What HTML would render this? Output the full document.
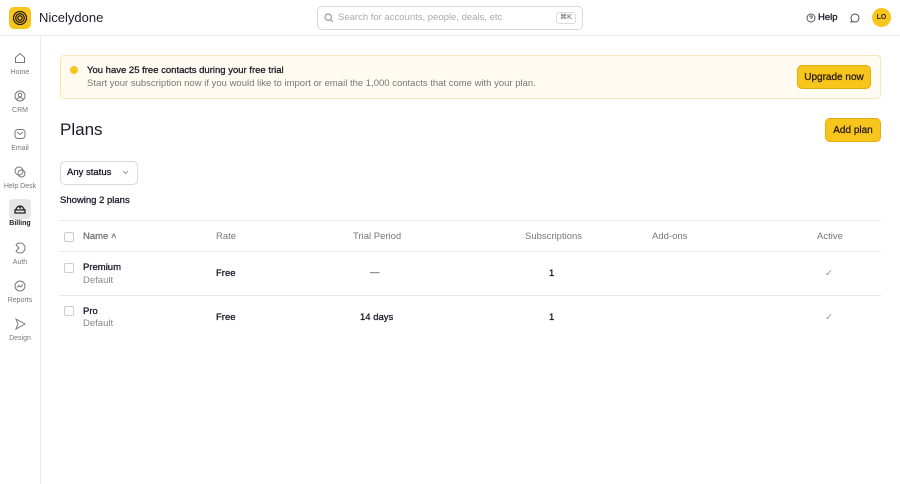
<!DOCTYPE html>
<html><head><style>
*{box-sizing:border-box;margin:0;padding:0}
body{width:900px;height:484px;background:#fff;font-family:"Liberation Sans",sans-serif;color:#2a1f33;position:relative;overflow:hidden}
.a{position:absolute}
.m{-webkit-text-stroke:0.3px currentColor;color:#1f1a2a}
.hdr{left:0;top:0;width:900px;height:36px;border-bottom:1px solid #ececec}
.side{left:0;top:36px;width:41px;height:448px;border-right:1px solid #ececec}
.ni{position:absolute;left:0;width:40px;text-align:center;font-size:7px;color:#777}
.ni svg{display:block;margin:0 auto 5px}
.btn{background:#f8c51c;border:1px solid #e2ad10;border-radius:5px;font-size:10px;color:#2a1f10;display:flex;align-items:center;justify-content:center;-webkit-text-stroke:0.3px #2a1f10}
.th{font-size:9.5px;color:#777;top:231px}
.cb{width:10px;height:10px;border:1px solid #ccc;border-radius:2px}
.t{font-size:9.5px}
.hr{left:60px;width:821px;height:1px;background:#e8e8e8}
</style></head><body>
<div class="a hdr"></div>
<div class="a" style="left:9px;top:7px;width:22px;height:22px;background:#f8c51c;border-radius:5px"></div>
<svg class="a" style="left:12px;top:10px" width="16" height="16" viewBox="0 0 16 16" fill="none" stroke="#2a1f10" stroke-width="1.3"><circle cx="8" cy="8" r="6.5"/><circle cx="8" cy="8" r="4.3"/><circle cx="8" cy="8" r="2.2"/></svg>
<div class="a" style="left:39px;top:10px;font-size:13px;color:#1f1a2a">Nicelydone</div>
<div class="a" style="left:317px;top:6px;width:266px;height:24px;border:1px solid #d8d8d8;border-radius:5px"></div>
<svg class="a" style="left:324px;top:13px" width="10" height="10" viewBox="0 0 10 10" fill="none" stroke="#999" stroke-width="1.2"><circle cx="4.2" cy="4.2" r="3.2"/><path d="M6.6 6.6L9 9"/></svg>
<div class="a" style="left:338px;top:12px;font-size:9.5px;color:#aaa">Search for accounts, people, deals, etc</div>
<div class="a" style="left:556px;top:12px;width:20px;height:12px;border:1px solid #ddd;border-radius:3px;font-size:7px;color:#888;text-align:center;line-height:10px;font-weight:bold">⌘K</div>
<svg class="a" style="left:806px;top:13px" width="10" height="10" viewBox="0 0 10 10" fill="none" stroke="#555" stroke-width="1"><circle cx="5" cy="5" r="4"/><path d="M3.8 4a1.2 1.2 0 1 1 1.2 1.3V6M5 7.2v.3"/></svg>
<div class="a m" style="left:818px;top:12px;font-size:9.5px">Help</div>
<svg class="a" style="left:850px;top:13px" width="10" height="10" viewBox="0 0 10 10" fill="none" stroke="#555" stroke-width="1"><path d="M5 1a4 4 0 1 1-2 7.5L1 9l.6-2A4 4 0 0 1 5 1z"/></svg>
<div class="a" style="left:872px;top:8px;width:19px;height:19px;border-radius:50%;background:#f8c51c;font-size:7px;font-weight:bold;text-align:center;line-height:19px">LO</div>
<div class="a side"></div>
<div class="ni" style="top:52px"><svg width="12" height="12" viewBox="0 0 12 12" fill="none" stroke="#777"><path d="M1.5 5.5L6 1.5l4.5 4v5h-9z"/></svg>Home</div>
<div class="ni" style="top:90px"><svg width="12" height="12" viewBox="0 0 12 12" fill="none" stroke="#777"><circle cx="6" cy="6" r="5"/><circle cx="6" cy="5" r="1.8"/><path d="M3 9.5a3.3 3.3 0 0 1 6 0"/></svg>CRM</div>
<div class="ni" style="top:128px"><svg width="12" height="12" viewBox="0 0 12 12" fill="none" stroke="#777"><rect x="1" y="1.5" width="10" height="9" rx="3"/><path d="M3 4l3 2.5L9 4"/></svg>Email</div>
<div class="ni" style="top:166px"><svg width="12" height="12" viewBox="0 0 12 12" fill="none" stroke="#777"><circle cx="5" cy="5" r="4"/><circle cx="7.5" cy="7.5" r="3.5"/></svg>Help Desk</div>
<div class="a" style="left:9px;top:199px;width:22px;height:20px;background:#e6e6e6;border-radius:4px"></div>
<div class="ni" style="top:203px;color:#222;font-weight:bold"><svg width="12" height="12" viewBox="0 0 12 12" fill="none" stroke="#222" stroke-width="1.3"><path d="M1 7h10v3H1zM2 7a4 4 0 0 1 8 0M5 3.5l2 2"/></svg>Billing</div>
<div class="ni" style="top:242px"><svg width="12" height="12" viewBox="0 0 12 12" fill="none" stroke="#777"><path d="M6 1a5 5 0 1 1-4 8l3-3-3-3A5 5 0 0 1 6 1z"/></svg>Auth</div>
<div class="ni" style="top:280px"><svg width="12" height="12" viewBox="0 0 12 12" fill="none" stroke="#777"><circle cx="6" cy="6" r="5"/><path d="M3 7.5l2-2 1.5 1.5L9 4.5"/></svg>Reports</div>
<div class="ni" style="top:318px"><svg width="12" height="12" viewBox="0 0 12 12" fill="none" stroke="#777"><path d="M2 1l9 5-9 5 2-5z"/></svg>Design</div>
<div class="a" style="left:60px;top:55px;width:821px;height:44px;background:#fffbf1;border:1px solid #f5e6b8;border-radius:4px"></div>
<div class="a" style="left:70px;top:66px;width:8px;height:8px;border-radius:50%;background:#f8c51c"></div>
<div class="a t m" style="left:87px;top:65px">You have 25 free contacts during your free trial</div>
<div class="a t" style="left:87px;top:78px;color:#777">Start your subscription now if you would like to import or email the 1,000 contacts that come with your plan.</div>
<div class="a btn" style="left:797px;top:65px;width:74px;height:24px">Upgrade now</div>
<div class="a" style="left:60px;top:120px;font-size:17px;color:#1f1a2a">Plans</div>
<div class="a btn" style="left:825px;top:118px;width:56px;height:24px">Add plan</div>
<div class="a" style="left:60px;top:161px;width:78px;height:24px;border:1px solid #d8d8d8;border-radius:5px"></div>
<div class="a t m" style="left:67px;top:167px">Any status</div>
<svg class="a" style="left:122px;top:170px" width="7" height="5" viewBox="0 0 7 5" fill="none" stroke="#999"><path d="M1 1l2.5 2.5L6 1"/></svg>
<div class="a t m" style="left:60px;top:195px">Showing 2 plans</div>
<div class="a hr" style="top:220px"></div>
<div class="a hr" style="top:251px"></div>
<div class="a hr" style="top:295px"></div>
<div class="a cb" style="left:64px;top:232px"></div>
<div class="a th m" style="left:83px">Name ˄</div>
<div class="a th" style="left:216px">Rate</div>
<div class="a th" style="left:353px">Trial Period</div>
<div class="a th" style="left:525px">Subscriptions</div>
<div class="a th" style="left:652px">Add-ons</div>
<div class="a th" style="left:817px">Active</div>
<div class="a cb" style="left:64px;top:263px"></div>
<div class="a t m" style="left:83px;top:262px">Premium</div>
<div class="a t" style="left:83px;top:275px;color:#888">Default</div>
<div class="a t m" style="left:216px;top:268px">Free</div>
<div class="a t" style="left:370px;top:267px">—</div>
<div class="a t m" style="left:549px;top:268px">1</div>
<div class="a t" style="left:825px;top:268px;color:#999">✓</div>
<div class="a cb" style="left:64px;top:306px"></div>
<div class="a t m" style="left:83px;top:306px">Pro</div>
<div class="a t" style="left:83px;top:318px;color:#888">Default</div>
<div class="a t m" style="left:216px;top:312px">Free</div>
<div class="a t m" style="left:360px;top:312px">14 days</div>
<div class="a t m" style="left:549px;top:312px">1</div>
<div class="a t" style="left:825px;top:312px;color:#999">✓</div>
</body></html>
